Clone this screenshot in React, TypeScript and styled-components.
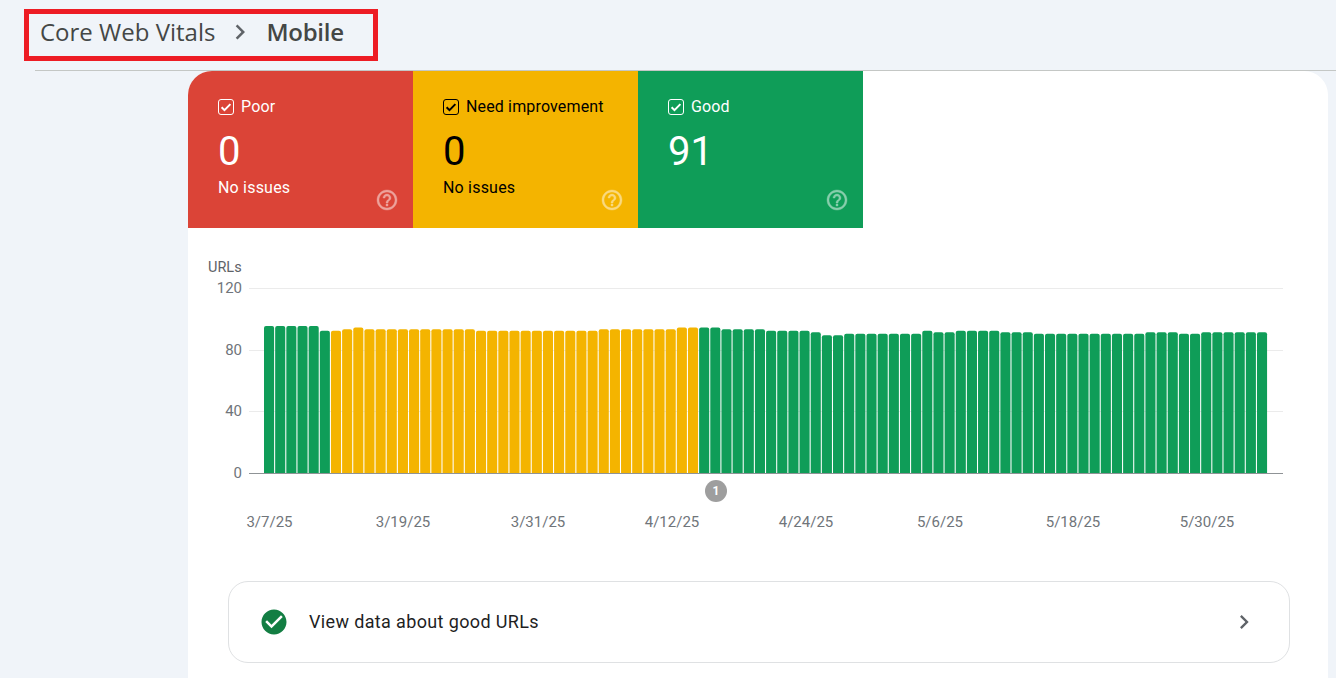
import React from "react";
import styled, { createGlobalStyle } from "styled-components";

const Global = createGlobalStyle`
  html, body { margin: 0; padding: 0; height: 100%; overflow: hidden; background: #f0f4f9; }
  body { font-family: Roboto, "Liberation Sans", sans-serif; }
`;

const Page = styled.div`
  display: flex;
  flex-direction: column;
  width: 1336px;
  height: 678px;
  overflow: hidden;
`;
const Header = styled.header`
  display: flex;
  height: 61px;
  padding: 9px 0 0 24px;
  box-sizing: border-box;
`;
const Highlight = styled.div`
  display: flex;
  align-items: center;
  width: 354px;
  height: 52px;
  box-sizing: border-box;
  border: 5px solid #ed1c24;
  padding: 0 0 8px 11px;
  color: #444746;
  font-family: "Open Sans", Roboto, sans-serif;
  font-size: 24px;
`;
const CrumbChevron = styled.svg`
  width: 30px;
  height: 30px;
  margin: 2px 11px 0 10px;
  fill: #5f6368;
  flex: none;
`;
const CrumbCurrent = styled.span`
  font-weight: 600;
  letter-spacing: -0.25px;
`;
const Rule = styled.div`
  height: 1px;
  margin: 9px 0 0 35px;
  background: #c4c7c5;
`;
const Card = styled.main`
  flex: 1;
  width: 1140px;
  margin-left: 188px;
  background: #fff;
  border-radius: 24px 24px 0 0;
  overflow: hidden;
`;
const Tiles = styled.div`
  display: flex;
  height: 157px;
`;
const Tile = styled.section<{ $bg: string; $fg: string }>`
  position: relative;
  width: 225px;
  box-sizing: border-box;
  padding: 26px 30px 0;
  background: ${(p) => p.$bg};
  color: ${(p) => p.$fg};
`;
const TileLabel = styled.div`
  display: flex;
  align-items: center;
  gap: 7px;
  height: 20px;
  font-size: 16px;
  line-height: 20px;
  letter-spacing: 0.15px;
`;
const Checkbox = styled.svg`
  width: 16px;
  height: 16px;
  flex: none;
`;
const TileValue = styled.div`
  margin-top: 11px;
  font-size: 40px;
  line-height: 48px;
`;
const TileNote = styled.div`
  margin-top: 2px;
  font-size: 16px;
  line-height: 20px;
  letter-spacing: 0.2px;
`;
const HelpIcon = styled.svg`
  position: absolute;
  right: 14px;
  bottom: 16px;
  width: 24px;
  height: 24px;
  fill: #fff;
  stroke: #fff;
  stroke-width: 0.4;
  opacity: 0.5;
`;
const ChartSvg = styled.svg`
  display: block;
  width: 1140px;
  height: 353px;
`;
const AxisText = styled.text`
  font-family: Roboto, sans-serif;
  font-size: 15px;
  fill: #70757a;
`;
const UnitText = styled(AxisText)`
  font-size: 14.5px;
  fill: #5f6368;
`;
const BadgeText = styled.text`
  font-family: Roboto, sans-serif;
  font-size: 12px;
  font-weight: 700;
  fill: #fff;
`;
const LinkRow = styled.a`
  display: flex;
  align-items: center;
  width: 1062px;
  height: 82px;
  margin-left: 40px;
  box-sizing: border-box;
  border: 1px solid #dfe1e3;
  border-radius: 20px;
  padding: 0 31px 0 30px;
  color: #1f1f1f;
  font-size: 18px;
  letter-spacing: 0.36px;
`;
const RowCheck = styled.svg`
  width: 30px;
  height: 30px;
  fill: #137e43;
  flex: none;
`;
const RowText = styled.span`
  flex: 1;
  margin: 0 0 2px 20px;
`;
const RowChevron = styled.svg`
  width: 28px;
  height: 28px;
  fill: #5f6368;
  flex: none;
`;

const CHEVRON = "M10 6L8.59 7.41 13.17 12l-4.58 4.59L10 18l6-6z";
const HELP =
  "M11 18h2v-2h-2v2zm1-16C6.48 2 2 6.48 2 12s4.48 10 10 10 10-4.48 10-10S17.52 2 12 2zm0 18c-4.41 0-8-3.59-8-8s3.59-8 8-8 8 3.59 8 8-3.59 8-8 8zm0-14c-2.21 0-4 1.79-4 4h2c0-1.1.9-2 2-2s2 .9 2 2c0 2-3 1.75-3 5h2c0-2.25 3-2.5 3-5 0-2.21-1.79-4-4-4z";

const tiles = [
  { label: "Poor", value: "0", note: "No issues", bg: "#db4437", fg: "#fff" },
  { label: "Need improvement", value: "0", note: "No issues", bg: "#f4b400", fg: "#000" },
  { label: "Good", value: "91", note: "", bg: "#0f9d58", fg: "#fff" },
];

const rep = (v: number, n: number) => Array<number>(n).fill(v);
const values: number[] = [
  ...rep(95, 5), 92,
  92, 93, 94, ...rep(93, 10), ...rep(92, 11), ...rep(93, 7), 94, 94,
  94, 94, ...rep(93, 4), ...rep(92, 4), 91, 89, 89, ...rep(90, 7),
  92, 91, 91, ...rep(92, 4), 91, 91, 91, ...rep(90, 10),
  91, 91, 91, 90, 90, ...rep(91, 6),
];

const OX = 188;
const OY = 228;
const BASE = 473 - OY;
const SCALE = 185 / 120;
const barColor = (i: number) => (i >= 6 && i <= 38 ? "#f4b400" : "#0f9d58");
const barPath = (i: number, v: number) => {
  const x = 264 + i * 11.157 - OX;
  const w = 10.1;
  const top = BASE - v * SCALE - 0.5;
  const r = 2;
  return `M${x} ${BASE}V${top + r}Q${x} ${top} ${x + r} ${top}H${x + w - r}Q${x + w} ${top} ${x + w} ${top + r}V${BASE}Z`;
};
const ticks = [
  { label: "120", y: 288 },
  { label: "80", y: 350 },
  { label: "40", y: 411 },
  { label: "0", y: 473 },
];
const dates = [
  ["3/7/25", 269.5], ["3/19/25", 403], ["3/31/25", 538], ["4/12/25", 672],
  ["4/24/25", 806], ["5/6/25", 940], ["5/18/25", 1073], ["5/30/25", 1207],
] as const;

export default function App() {
  return (
    <Page>
      <Global />
      <Header>
        <Highlight>
          <span>Core Web Vitals</span>
          <CrumbChevron viewBox="0 0 24 24"><path d={CHEVRON} /></CrumbChevron>
          <CrumbCurrent>Mobile</CrumbCurrent>
        </Highlight>
      </Header>
      <Rule />
      <Card>
        <Tiles>
          {tiles.map((t) => (
            <Tile key={t.label} $bg={t.bg} $fg={t.fg}>
              <TileLabel>
                <Checkbox viewBox="0 0 16 16" fill="none" stroke="currentColor">
                  <rect x="0.5" y="0.5" width="15" height="15" rx="2.5" />
                  <path d="M3.6 8.2l2.9 2.9 5.9-6" strokeWidth="2" />
                </Checkbox>
                {t.label}
              </TileLabel>
              <TileValue>{t.value}</TileValue>
              {t.note && <TileNote>{t.note}</TileNote>}
              <HelpIcon viewBox="0 0 24 24"><path d={HELP} /></HelpIcon>
            </Tile>
          ))}
        </Tiles>
        <ChartSvg viewBox="0 0 1140 353">
          <UnitText x={208 - OX} y={272 - OY}>URLs</UnitText>
          {ticks.map((t) => (
            <React.Fragment key={t.label}>
              <AxisText x={242 - OX} y={t.y - OY + 5} textAnchor="end">{t.label}</AxisText>
              <line
                x1={249 - OX}
                x2={1283 - OX}
                y1={t.y - OY + 0.5}
                y2={t.y - OY + 0.5}
                stroke={t.y === 473 ? "#8f9396" : "#ebebeb"}
              />
            </React.Fragment>
          ))}
          {values.map((v, i) => (
            <path key={i} d={barPath(i, v)} fill={barColor(i)} />
          ))}
          <circle cx={716 - OX} cy={491 - OY} r={11} fill="#9e9e9e" />
          <BadgeText x={716 - OX} y={495 - OY} textAnchor="middle">1</BadgeText>
          {dates.map(([d, x]) => (
            <AxisText key={d} x={x - OX} y={527 - OY} textAnchor="middle">{d}</AxisText>
          ))}
        </ChartSvg>
        <LinkRow>
          <RowCheck viewBox="0 0 24 24">
            <path d="M12 2C6.48 2 2 6.48 2 12s4.48 10 10 10 10-4.48 10-10S17.52 2 12 2zm-2 15l-5-5 1.41-1.41L10 14.17l7.59-7.59L19 8l-9 9z" />
          </RowCheck>
          <RowText>View data about good URLs</RowText>
          <RowChevron viewBox="0 0 24 24"><path d={CHEVRON} /></RowChevron>
        </LinkRow>
      </Card>
    </Page>
  );
}
